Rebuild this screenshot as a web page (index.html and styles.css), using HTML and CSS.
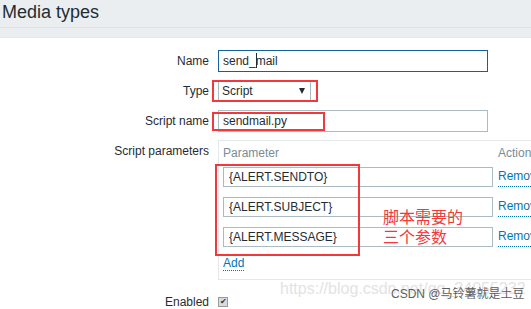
FILE: index.html
```html
<!DOCTYPE html>
<html lang="zh">
<head>
  <meta charset="UTF-8" />
  <title>Media types</title>
  <link rel="stylesheet" href="styles.css">
</head>
<body>
  <div class="page">
    <div class="header"><h1>Media types</h1></div>
    <div class="band"></div>

    <form class="form">
      <label class="lbl" for="name">Name</label>
      <div><input type="text" id="name" class="txt focus" value="send_mail" /></div>

      <label class="lbl">Type</label>
      <div><div class="select"><span>Script</span><i class="arrow"></i></div></div>

      <label class="lbl" for="script">Script name</label>
      <div><input type="text" id="script" class="txt" value="sendmail.py" /></div>

      <label class="lbl">Script parameters</label>
      <div class="params">
        <div class="params-head"><span>Parameter</span><span>Action</span></div>
        <div class="params-rows">
          <input type="text" class="param" value="{ALERT.SENDTO}" /><a class="link">Remove</a>
          <input type="text" class="param" value="{ALERT.SUBJECT}" /><a class="link">Remove</a>
          <input type="text" class="param" value="{ALERT.MESSAGE}" /><a class="link">Remove</a>
          <div class="add"><a class="link">Add</a></div>
        </div>
      </div>

      <label class="lbl enabled">Enabled</label>
      <div class="enabled check-cell"><span class="check">&#10004;</span></div>
    </form>

    <!-- annotations drawn on top of the screenshot -->
    <span class="caret"></span>
    <div class="mark mark-type"></div>
    <div class="mark mark-script"></div>
    <div class="mark mark-params"></div>
    <div class="note">脚本需要的<br>三个参数</div>
    <div class="wm-url">https://blog.csdn.net/qq_34055232</div>
    <div class="wm-csdn">CSDN @马铃薯就是土豆</div>
  </div>
</body>
</html>
```

FILE: styles.css
```css
html, body {
  margin: 0;
  overflow: hidden;
}
body {
  font-family: 'Liberation Sans', Arial, 'Noto Sans CJK SC', sans-serif;
  font-size: 12px;
  color: #1f2c33;
  background: #fff;
}
.page {
  position: relative;
  width: 531px;
  height: 309px;
  overflow: hidden;
}
.header {
  height: 27px;
  background: #ebeef0;
  border-bottom: 1px solid #dde2e5;
}
.header h1 {
  margin: 0;
  padding-left: 2px;
  font-size: 18px;
  font-weight: normal;
  line-height: 24px;
}
.band {
  height: 9px;
  background: #ebeef0;
  border-bottom: 1px solid #e6e9eb;
}
.form {
  display: grid;
  grid-template-columns: 209px 1fr;
  column-gap: 9px;
  row-gap: 8px;
  padding-top: 12px;
}
.lbl {
  text-align: right;
  line-height: 22px;
  white-space: nowrap;
}
.txt {
  box-sizing: border-box;
  width: 270px;
  height: 22px;
  margin: 0;
  padding: 0 4px;
  border: 1px solid #acbbc2;
  font: inherit;
  color: inherit;
  outline: none;
}
.txt.focus { border-color: #14609b; }
.select {
  box-sizing: border-box;
  width: 93px;
  height: 22px;
  border: 1px solid #acbbc2;
  padding: 0 5px 0 3px;
  display: flex;
  align-items: center;
  justify-content: space-between;
}
.arrow {
  width: 0;
  height: 0;
  border-left: 3.5px solid transparent;
  border-right: 3.5px solid transparent;
  border-top: 6px solid #1f2c33;
}
.params {
  width: 340px;
  border: 1px solid #e4e8ea;
  padding: 0 4px 8px;
}
.params-head, .params-rows {
  display: grid;
  grid-template-columns: 270px auto;
  column-gap: 5px;
}
.params-head {
  color: #768d99;
  line-height: 24px;
  padding-bottom: 2px;
}
.params-rows { row-gap: 10px; }
.param {
  box-sizing: border-box;
  width: 270px;
  height: 20px;
  margin: 0;
  padding: 0 5px;
  border: 1px solid #acbbc2;
  font: inherit;
  color: inherit;
}
.link {
  color: #0275b8;
  line-height: 19px;
  text-decoration: none;
  border-bottom: 1px dotted #0275b8;
  align-self: start;
  justify-self: start;
}
.add {
  grid-column: 1 / -1;
  margin-top: -1px;
  line-height: 15px;
}
.add .link { line-height: 15px; }
.enabled { margin-top: 3px; }
.check-cell {
  height: 22px;
  display: flex;
  align-items: center;
}
.check {
  box-sizing: border-box;
  width: 10px;
  height: 10px;
  background: #dadada;
  border: 1px solid #9a9a9a;
  color: #333;
  font-size: 8px;
  line-height: 8px;
  text-align: center;
}

/* annotations */
.caret {
  position: absolute;
  left: 256px;
  top: 53px;
  width: 1px;
  height: 15px;
  background: #1f2c33;
}
.mark {
  position: absolute;
  border: 2px solid #f2383b;
}
.mark-type { left: 212px; top: 80px; width: 102px; height: 18px; }
.mark-script { left: 212px; top: 112px; width: 109px; height: 15px; }
.mark-params { left: 215px; top: 164px; width: 141px; height: 88px; }
.note {
  position: absolute;
  left: 383px;
  top: 206px;
  font-family: 'Noto Sans CJK SC', sans-serif;
  font-size: 16px;
  line-height: 20px;
  color: #f2383b;
}
.wm-url {
  position: absolute;
  left: 280px;
  top: 281px;
  font-size: 16px;
  line-height: 16px;
  color: #e3e3e3;
}
.wm-csdn {
  position: absolute;
  left: 391px;
  top: 287px;
  font-family: 'Liberation Sans', 'Noto Sans CJK SC', sans-serif;
  font-size: 12px;
  line-height: 14px;
  color: #5e5e5e;
}
```
